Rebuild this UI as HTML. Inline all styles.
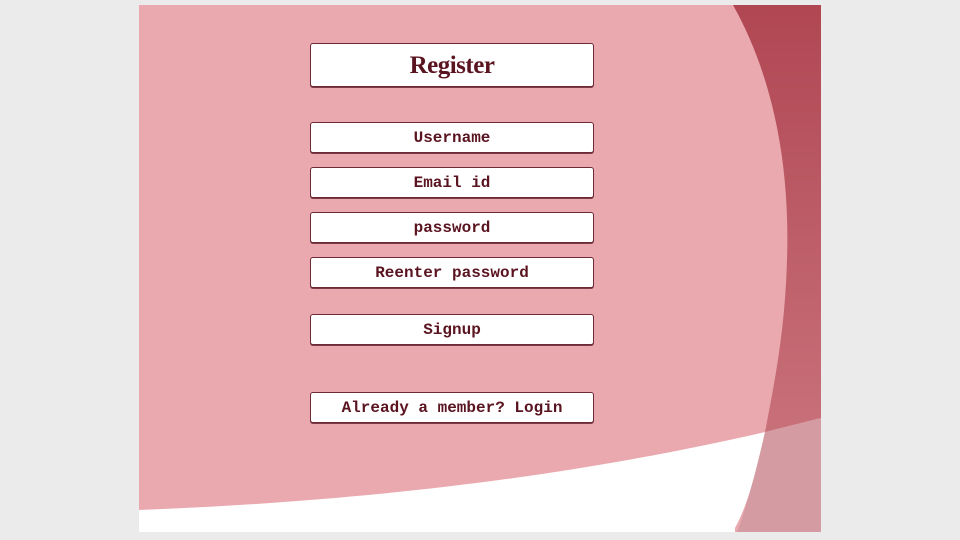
<!DOCTYPE html>
<html><head><style>
body{margin:0;width:960px;height:540px;background:#ebebeb;overflow:hidden;position:relative}
svg{position:absolute;left:0;top:0}
.b{position:absolute;left:310px;width:284px;background:#fff;border:1.5px solid #6b2a35;border-radius:3px;box-sizing:border-box;text-align:center;color:#5a1420;font-family:"Liberation Mono",monospace;font-weight:bold;font-size:16px;box-shadow:0 1px 0 #7a3a45}
</style></head><body>
<svg width="960" height="540">
<defs><linearGradient id="g" x1="0" y1="0" x2="0" y2="1"><stop offset="0" stop-color="#b04753"/><stop offset="1" stop-color="#c87079"/></linearGradient></defs>
<rect x="139" y="5" width="682" height="527" fill="#e9a9ae"/>
<path d="M733,5 C775,80 790,170 787,260 C785,330 775,380 765,432 L821,418 L821,5Z" fill="url(#g)"/>
<path d="M139,510 C400,500 600,470 765,432 C755,480 745,510 735,528 L735,532 L139,532Z" fill="#fff"/>
<path d="M765,432 L821,418 L821,532 L737,532 C740,525 752,490 765,432Z" fill="#d49ca2"/>
</svg>
<div class="b" style="top:43px;height:44px;line-height:43px;font-family:'Liberation Serif',serif;font-weight:bold;font-size:25px;letter-spacing:-0.5px">Register</div>
<div class="b" style="top:122px;height:31px;line-height:30px">Username</div>
<div class="b" style="top:167px;height:31px;line-height:30px">Email id</div>
<div class="b" style="top:212px;height:31px;line-height:30px">password</div>
<div class="b" style="top:257px;height:31px;line-height:30px">Reenter password</div>
<div class="b" style="top:314px;height:31px;line-height:30px">Signup</div>
<div class="b" style="top:392px;height:31px;line-height:30px">Already a member? Login</div>
</body></html>
